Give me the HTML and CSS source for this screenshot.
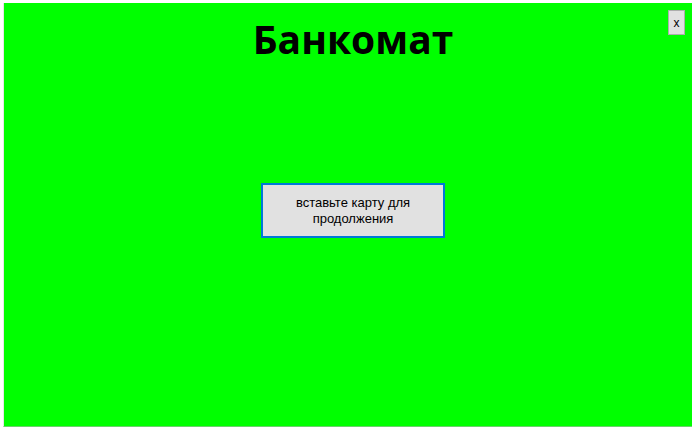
FILE: index.html
```html
<!DOCTYPE html>
<html lang="ru">
<head>
<meta charset="utf-8">
<title>Банкомат</title>
<link rel="stylesheet" href="styles.css">
</head>
<body>
<div class="window">
  <button class="close" type="button">x</button>
  <main class="content">
    <h1 class="title">Банкомат</h1>
    <button class="insert" type="button">вставьте карту для продолжения</button>
  </main>
</div>
</body>
</html>
```
FILE: styles.css
```css
html, body {
  margin: 0;
  padding: 0;
  background: #ffffff;
  width: 694px;
  height: 431px;
  overflow: hidden;
}
body {
  padding: 3px 2px 3px 3px;
  box-sizing: border-box;
}
.window {
  position: relative;
  height: 424px;
  background: #00ff00;
  border-bottom: 1px solid #6fcf6f;
  border-left: 1px solid #e6e6e6;
  box-sizing: border-box;
}
.content {
  display: flex;
  flex-direction: column;
  align-items: center;
  padding-left: 10px;
}
.title {
  margin: 12px 0 0 0;
  font-family: "Open Sans", "Noto Sans", sans-serif;
  font-weight: 700;
  font-size: 39px;
  line-height: 48px;
  color: #000;
}
.insert {
  margin-top: 120px;
  width: 184px;
  height: 55px;
  background: #e1e1e1;
  border: 2px solid #0078d7;
  padding: 0 28px;
  font-family: "Liberation Sans", Arial, sans-serif;
  font-size: 13px;
  line-height: 16px;
  color: #000;
  text-align: center;
}
.close {
  position: absolute;
  top: 7px;
  right: 7px;
  width: 17px;
  height: 25px;
  padding: 0;
  background: #e1e1e1;
  border: 1px solid #adadad;
  font-family: "Liberation Sans", Arial, sans-serif;
  font-size: 12px;
  color: #000;
}
```
